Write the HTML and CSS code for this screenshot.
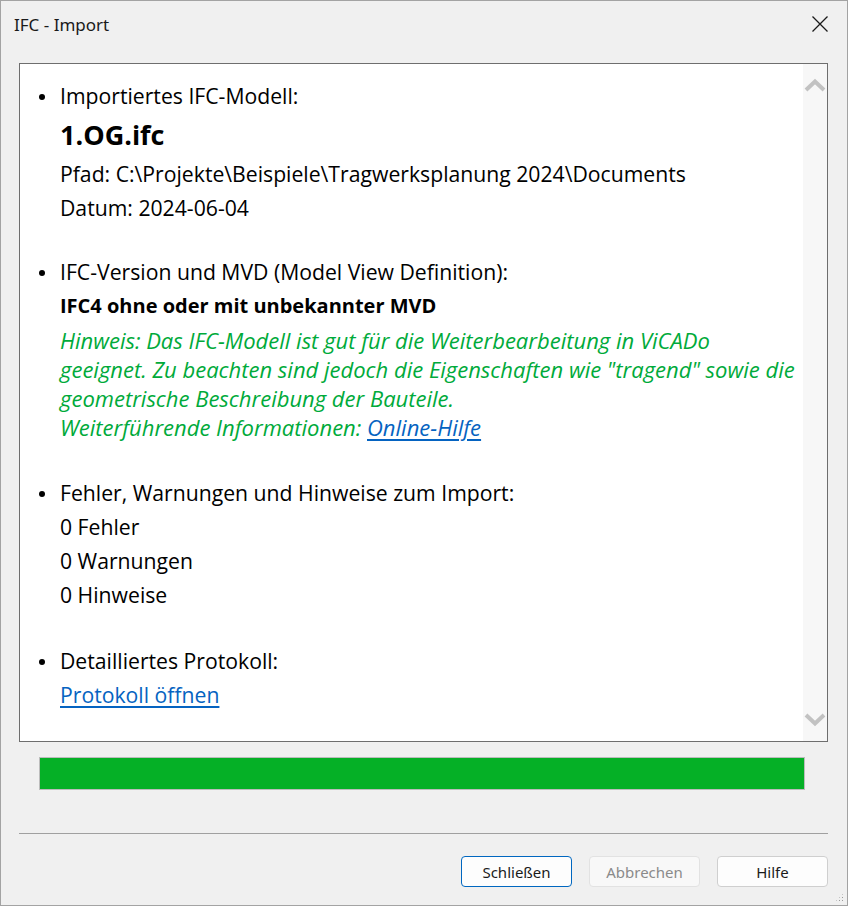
FILE: index.html
```html
<!DOCTYPE html>
<html lang="de">
<head>
<meta charset="utf-8">
<title>IFC - Import</title>
<link rel="stylesheet" href="styles.css">
</head>
<body>
<div class="window">
  <div class="titlebar">
    <span class="title">IFC - Import</span>
    <svg class="close" width="18" height="18" viewBox="0 0 18 18"><path d="M1.5 1.5 L16.5 16.5 M16.5 1.5 L1.5 16.5" stroke="#1a1a1a" stroke-width="1.3" fill="none"/></svg>
  </div>
  <div class="panel">
    <div class="content">
      <div class="item">
        <div class="line bullet">Importiertes IFC-Modell:</div>
        <div class="line big">1.OG.ifc</div>
        <div class="line">Pfad: C:\Projekte\Beispiele\Tragwerksplanung 2024\Documents</div>
        <div class="line">Datum: 2024-06-04</div>
      </div>
      <div class="item second">
        <div class="line bullet">IFC-Version und MVD (Model View Definition):</div>
        <div class="line bold">IFC4 ohne oder mit unbekannter MVD</div>
        <div class="hint">
          <div class="hline">Hinweis: Das IFC-Modell ist gut für die Weiterbearbeitung in ViCADo</div>
          <div class="hline">geeignet. Zu beachten sind jedoch die Eigenschaften wie "tragend" sowie die</div>
          <div class="hline">geometrische Beschreibung der Bauteile.</div>
          <div class="hline">Weiterführende Informationen: <a class="link" href="#">Online-Hilfe</a></div>
        </div>
      </div>
      <div class="item third">
        <div class="line bullet">Fehler, Warnungen und Hinweise zum Import:</div>
        <div class="line">0 Fehler</div>
        <div class="line">0 Warnungen</div>
        <div class="line">0 Hinweise</div>
      </div>
      <div class="item fourth">
        <div class="line bullet">Detailliertes Protokoll:</div>
        <div class="line"><a class="link" href="#">Protokoll öffnen</a></div>
      </div>
    </div>
    <div class="scrollbar">
      <svg class="chev" width="22" height="16" viewBox="0 0 22 16"><path d="M2 13 L11 4.5 L20 13" stroke="#c2c2c2" stroke-width="4" fill="none"/></svg>
      <svg class="chev" width="22" height="16" viewBox="0 0 22 16"><path d="M2 3 L11 11.5 L20 3" stroke="#c2c2c2" stroke-width="4" fill="none"/></svg>
    </div>
  </div>
  <div class="progress"><div class="fill"></div></div>
  <div class="separator"></div>
  <div class="buttons">
    <button class="btn default">Schließen</button>
    <button class="btn disabled">Abbrechen</button>
    <button class="btn">Hilfe</button>
  </div>
  <div class="grip"></div>
</div>
</body>
</html>
```
FILE: styles.css
```css
* { box-sizing: border-box; }
html, body { margin: 0; padding: 0; }
body { background: #f0f0f0; }

.window {
  position: relative;
  width: 848px;
  height: 906px;
  border: 1px solid #a3a3a3;
  background: #f0f0f0;
  display: flex;
  flex-direction: column;
}

.titlebar {
  height: 46px;
  display: flex;
  align-items: center;
  justify-content: space-between;
  padding: 0 18px 0 13px;
}
.title {
  font-family: "Noto Sans", "Open Sans", sans-serif;
  font-size: 17px;
  color: #1a1a1a;
}

.panel {
  margin: 16px 19px 0 18px;
  height: 679px;
  border: 1px solid #6e6e6e;
  background: #ffffff;
  display: flex;
}
.content {
  flex: 1;
  padding: 15px 0 0 40px;
  font-family: "Open Sans", sans-serif;
  font-size: 21.2px;
  color: #000;
}
.scrollbar {
  width: 24px;
  background: #f7f7f7;
  display: flex;
  flex-direction: column;
  justify-content: space-between;
  align-items: center;
  padding: 13px 0 13px 0;
}

.line {
  height: 34px;
  line-height: 34px;
  white-space: nowrap;
}
.bullet { position: relative; }
.bullet::before {
  content: "";
  position: absolute;
  left: -21px;
  top: 15px;
  width: 6px;
  height: 6px;
  border-radius: 50%;
  background: #000;
}
.big {
  height: 44px;
  line-height: 44px;
  font-size: 27px;
  font-weight: bold;
}
.bold { font-weight: bold; font-size: 20px; }

.second { margin-top: 30px; }
.hint {
  margin-top: 3px;
  color: #00aa3a;
  font-style: italic;
  font-size: 22px;
}
.hline { height: 29px; line-height: 29px; white-space: nowrap; }
.third { margin-top: 34px; }
.fourth { margin-top: 32px; }

.link { color: #0563c1; text-decoration: underline; text-underline-offset: 3px; }

.progress {
  margin: 15px 42px 0 38px;
  height: 33px;
  border: 1px solid #bcbcbc;
  background: #e6e6e6;
}
.fill { width: 100%; height: 100%; background: #05b026; }

.separator {
  margin: 43px 19px 0 18px;
  height: 1px;
  background: #a0a0a0;
}

.buttons {
  display: flex;
  justify-content: flex-end;
  gap: 17px;
  margin: 22px 19px 0 0;
}
.btn {
  width: 111px;
  height: 31px;
  border: 1px solid #cfcfcf;
  border-radius: 4px;
  background: #fdfdfd;
  font-family: "Noto Sans", "Open Sans", sans-serif;
  font-size: 15px;
  color: #1a1a1a;
  padding: 0;
}
.btn.default { border: 1px solid #0067c0; }
.btn.disabled { color: #8a8a8a; background: #f8f8f8; border-color: #e2e2e2; }

.grip {
  position: absolute;
  right: 3px;
  bottom: 3px;
  width: 9px;
  height: 9px;
  background-image: radial-gradient(circle, #9a9a9a 0.8px, transparent 1px);
  background-size: 3px 3px;
  clip-path: polygon(100% 0, 100% 100%, 0 100%);
}
```
